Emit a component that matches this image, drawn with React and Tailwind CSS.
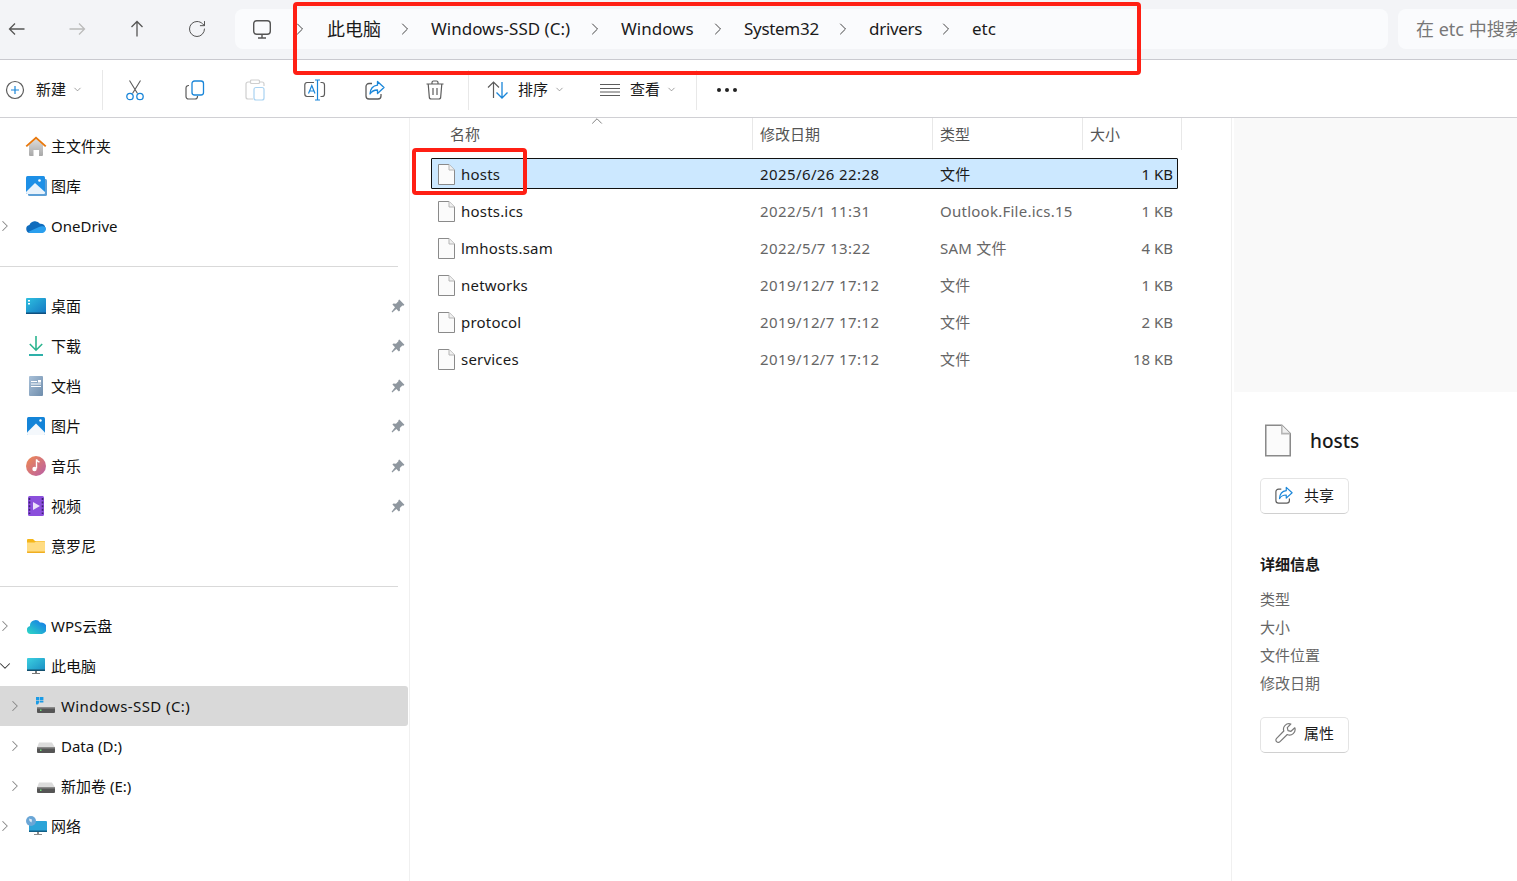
import { RotateCw, ChevronRight, ChevronDown, ChevronUp } from 'lucide-react'

const BLUE = '#1a86d9'
const GRAY = '#5c5c5c'

/* ---------- small drawings ---------- */

const NavArrow = ({ d, color }) => (
  <svg width="20" height="20" viewBox="0 0 20 20" fill="none">
    <path d={d} stroke={color} strokeWidth="1.300" />
  </svg>
)

const MonitorIcon = () => (
  <svg width="18" height="19" viewBox="0 0 18 19" fill="none" className="ml-[18px] shrink-0">
    <rect x=".7" y=".7" width="16.600" height="13.600" rx="3" stroke="#555" strokeWidth="1.400" />
    <path d="M9 14.500v3M5 18h8" stroke="#555" strokeWidth="1.400" />
  </svg>
)

const PlusIcon = () => (
  <svg width="20" height="20" viewBox="0 0 20 20" fill="none">
    <circle cx="10" cy="10" r="8.500" stroke={GRAY} strokeWidth="1.200" />
    <path d="M10 6v8M6 10h8" stroke={BLUE} strokeWidth="1.200" />
  </svg>
)

const CutIcon = () => (
  <svg width="20" height="22" viewBox="0 0 20 22" fill="none">
    <path d="M4.500 1.500 12.500 14.500M15.500 1.500 7.500 14.500" stroke={GRAY} strokeWidth="1.100" />
    <circle cx="5" cy="17.500" r="3.200" stroke={BLUE} strokeWidth="1.300" />
    <circle cx="15" cy="17.500" r="3.200" stroke={BLUE} strokeWidth="1.300" />
  </svg>
)

const CopyIcon = () => (
  <svg width="20" height="20" viewBox="0 0 20 20" fill="none">
    <path d="M4 5.500h-.5A2.500 2.500 0 0 0 1 8v8.500A2.500 2.500 0 0 0 3.500 19H10a2.500 2.500 0 0 0 2.500-2.500V16" stroke={GRAY} strokeWidth="1.200" />
    <rect x="7" y="1" width="11.500" height="14" rx="2.500" stroke={BLUE} strokeWidth="1.300" />
  </svg>
)

const PasteIcon = () => (
  <svg width="20" height="22" viewBox="0 0 20 22" fill="none">
    <path d="M5 3H3a2 2 0 0 0-2 2v13a2 2 0 0 0 2 2h5M15 3h2a2 2 0 0 1 2 2v2" stroke="#cfcfcf" strokeWidth="1.200" />
    <rect x="5.500" y="1" width="9" height="3.500" rx="1" stroke="#cfcfcf" strokeWidth="1.200" />
    <rect x="9" y="8.500" width="10" height="12.500" rx="2" stroke="#a9d3f2" strokeWidth="1.200" />
  </svg>
)

const RenameIcon = () => (
  <svg width="22" height="22" viewBox="0 0 22 22" fill="none">
    <path d="M10 3.500H3A2.500 2.500 0 0 0 .8 6v9A2.500 2.500 0 0 0 3 17.500h7M16.500 3.500H18A2.500 2.500 0 0 1 20.500 6v9a2.500 2.500 0 0 1-2.500 2.500h-1.500" stroke={GRAY} strokeWidth="1.200" />
    <path d="M13.500 1v20M11 1h5M11 21h5" stroke={BLUE} strokeWidth="1.200" />
    <path d="M4.500 14.500 7.800 6.500l3.200 8M5.700 12h4.300" stroke={BLUE} strokeWidth="1.200" />
  </svg>
)

const ShareIcon = ({ size = 20 }) => (
  <svg width={size} height={size} viewBox="0 0 20 20" fill="none">
    <path d="M7 3.500H4A3 3 0 0 0 1 6.500v9.500a3 3 0 0 0 3 3h9a3 3 0 0 0 3-3v-2" stroke={GRAY} strokeWidth="1.300" />
    <path d="M12.500 1.500 19 7.500l-6.500 6V10C9 10 6.800 11 5 14c.3-5 3-8.300 7.500-8.800z" stroke={BLUE} strokeWidth="1.300" strokeLinejoin="round" />
  </svg>
)

const TrashIcon = () => (
  <svg width="18" height="20" viewBox="0 0 18 20" fill="none">
    <path d="M.5 4h17M6 4V2.500A1.500 1.500 0 0 1 7.500 1h3A1.500 1.500 0 0 1 12 2.500V4" stroke={GRAY} strokeWidth="1.200" />
    <path d="M2.200 4 3.300 17a2 2 0 0 0 2 2h7.400a2 2 0 0 0 2-2L15.800 4" stroke={GRAY} strokeWidth="1.200" />
    <path d="M7 8v7M11 8v7" stroke={GRAY} strokeWidth="1.200" />
  </svg>
)

const SortIcon = () => (
  <svg width="22" height="20" viewBox="0 0 22 20" fill="none">
    <path d="M6.500 18V2M1 7.500l5.500-5.500L12 7.500" stroke={GRAY} strokeWidth="1.200" />
    <path d="M15 2v16M9.500 12.500 15 18l5.500-5.500" stroke={BLUE} strokeWidth="1.300" />
  </svg>
)

const ViewIcon = () => (
  <svg width="20" height="14" viewBox="0 0 20 14" fill="none">
    <path d="M0 1.500h20M0 5.500h20M0 9h20M0 12.500h20" stroke={GRAY} strokeWidth="1.100" />
  </svg>
)

const DocIcon = ({ w = 17, h = 21 }) => (
  <svg width={w} height={h} viewBox="0 0 17 21" fill="none">
    <path d="M.5.500h10.500l5.500 5.500v14.500H.5z" fill="#fbfbfb" stroke="#8a8a8a" />
    <path d="M11 .5V6h5.500" fill="#f0f0f0" stroke="#b5b5b5" />
  </svg>
)

const PinIcon = () => (
  <svg width="14" height="14" viewBox="0 0 14 14" fill="#8f979f">
    <path d="M8.300.6 13.400 5.700l-1.100 1-.9-.3-2.600 2.600.2 2.500-1.100 1.100-2.600-2.600L1.300 13.400.6 12.700l3.400-4.500L1.400 5.600l1.100-1.100 2.500.2 2.600-2.600-.3-.9z" />
  </svg>
)

const HomeIcon = () => (
  <svg width="22" height="20" viewBox="0 0 22 20">
    <defs>
      <linearGradient id="homeBody" x1="0" y1="0" x2="0" y2="1">
        <stop offset="0" stopColor="#dcdcdc" />
        <stop offset="1" stopColor="#a8a8a8" />
      </linearGradient>
    </defs>
    <path d="M4 9 11 3l7 6v10a1 1 0 0 1-1 1h-3v-6H8.500v6H5a1 1 0 0 1-1-1z" fill="url(#homeBody)" />
    <path d="M.6 9.800 11 .5l10.400 9.300-1.300 1.200L11 3 1.900 11z" fill="#e8780c" />
  </svg>
)

const GalleryIcon = () => (
  <svg width="21" height="20" viewBox="0 0 21 20">
    <rect x="2" y="3" width="19" height="17" rx="1.500" fill="#5c9fd6" />
    <rect x="0" y="0" width="19" height="18" rx="1.500" fill="#1d8fe6" />
    <path d="M0 16 9 7l10 9v1a1 1 0 0 1-1 1H1.500A1.500 1.500 0 0 1 0 16.500z" fill="#e8f2fb" />
    <circle cx="13.500" cy="4.500" r="1.300" fill="#fff" />
  </svg>
)

const OneDriveIcon = () => (
  <svg width="20" height="13" viewBox="0 0 20 13">
    <path d="M4 13a4 4 0 0 1-.6-7.900A6 6 0 0 1 14 3.800 4.500 4.500 0 0 1 15.500 13z" fill="#0f6cbd" />
    <path d="M4 13h12a4 4 0 0 0 3.500-5.800C18 6 15 6 13 7L3 11.500c0 1 .3 1.500 1 1.500z" fill="#2a9fee" />
  </svg>
)

const DesktopIcon = () => (
  <svg width="20" height="16" viewBox="0 0 20 16">
    <defs>
      <linearGradient id="deskBody" x1="0" y1="0" x2="1" y2="1">
        <stop offset="0" stopColor="#2ec0e0" />
        <stop offset="1" stopColor="#1476c2" />
      </linearGradient>
    </defs>
    <rect width="20" height="16" rx="1" fill="url(#deskBody)" />
    <rect y="14.500" width="20" height="1.500" fill="#10507f" />
    <rect x="2" y="2" width="2" height="1.500" fill="#fff" />
    <rect x="2" y="5" width="2" height="1.500" fill="#fff" />
  </svg>
)

const DownloadIcon = () => (
  <svg width="16" height="20" viewBox="0 0 16 20" fill="none">
    <path d="M8 0v14M1.800 8 8 14.200 14.200 8" stroke="#2cb58f" strokeWidth="1.600" />
    <path d="M1 19h14" stroke="#17a8a0" strokeWidth="1.800" />
  </svg>
)

const DocsIcon = () => (
  <svg width="14" height="20" viewBox="0 0 14 20">
    <defs>
      <linearGradient id="docsBody" x1="0" y1="0" x2="1" y2="1">
        <stop offset="0" stopColor="#a8c0d8" />
        <stop offset="1" stopColor="#6f8dac" />
      </linearGradient>
    </defs>
    <rect width="14" height="20" rx="1" fill="url(#docsBody)" />
    <path d="M2 5.500h6M2 8h10M2 10.500h10" stroke="#fff" strokeWidth="1" />
    <rect x="9" y="4" width="3" height="2.500" fill="#fff" />
  </svg>
)

const PicturesIcon = () => (
  <svg width="18" height="18" viewBox="0 0 18 18">
    <rect width="18" height="18" rx="1.500" fill="#1484d8" />
    <path d="M0 15.500 9 6.500l9 9V17a1 1 0 0 1-1 1H1a1 1 0 0 1-1-1z" fill="#f4f8fc" />
    <circle cx="13.500" cy="3.500" r="1.200" fill="#fff" />
  </svg>
)

const MusicIcon = () => (
  <svg width="20" height="20" viewBox="0 0 20 20">
    <defs>
      <linearGradient id="musicBody" x1="0" y1="0" x2="1" y2="1">
        <stop offset="0" stopColor="#f08a4f" />
        <stop offset="1" stopColor="#b85ea8" />
      </linearGradient>
    </defs>
    <circle cx="10" cy="10" r="10" fill="url(#musicBody)" />
    <path d="M10.500 3.500v9" stroke="#fff" strokeWidth="1.400" />
    <path d="M10.500 3.500c.5 1.800 2.200 2 3 2.800" stroke="#fff" strokeWidth="1.400" fill="none" />
    <circle cx="8.500" cy="13" r="2.200" fill="#fff" />
  </svg>
)

const VideoIcon = () => (
  <svg width="16" height="20" viewBox="0 0 16 20">
    <rect width="16" height="20" rx="1.500" fill="#8b4fdc" />
    <path d="M5 6v8l7-4z" fill="#ebe0fb" />
    <path d="M1.500 2v16" stroke="#3d2270" strokeWidth="1.600" strokeDasharray="2 1.600" />
    <path d="M14.500 2v16" stroke="#3d2270" strokeWidth="1.600" strokeDasharray="2 1.600" />
  </svg>
)

const FolderIcon = () => (
  <svg width="18" height="14" viewBox="0 0 18 14">
    <path d="M0 1a1 1 0 0 1 1-1h5l2 2h9a1 1 0 0 1 1 1v10a1 1 0 0 1-1 1H1a1 1 0 0 1-1-1z" fill="#f5b619" />
    <path d="M0 3.500h7.500L9 2.500h8a1 1 0 0 1 1 1v9a1 1 0 0 1-1 1H1a1 1 0 0 1-1-1z" fill="#ffdc82" />
    <path d="M0 12.500h18V13a1 1 0 0 1-1 1H1a1 1 0 0 1-1-1z" fill="#f0ae20" />
  </svg>
)

const WpsIcon = () => (
  <svg width="19" height="15" viewBox="0 0 19 15">
    <defs>
      <linearGradient id="wpsBody" x1="0" y1="1" x2="1" y2="0">
        <stop offset="0" stopColor="#2ed9c4" />
        <stop offset="1" stopColor="#1272ea" />
      </linearGradient>
    </defs>
    <path d="M4 15a4 4 0 0 1-1-7.900A5.500 5.500 0 0 1 13 3.500 5.500 5.500 0 0 1 15 15z" fill="url(#wpsBody)" />
  </svg>
)

const PcIcon = () => (
  <svg width="18" height="16" viewBox="0 0 18 16">
    <defs>
      <linearGradient id="pcBody" x1="0" y1="0" x2="1" y2="1">
        <stop offset="0" stopColor="#3cd0e0" />
        <stop offset="1" stopColor="#1a8ec4" />
      </linearGradient>
    </defs>
    <rect width="18" height="12.500" rx="1" fill="url(#pcBody)" />
    <rect y="11.500" width="18" height="1.500" fill="#14506f" />
    <path d="M8 13h2v2h3v1H5v-1h3z" fill="#7a7a7a" />
  </svg>
)

const DriveIcon = ({ windows }) => (
  <svg width="20" height="18" viewBox="0 0 20 18">
    {windows && (
      <g fill="#1a9be6">
        <rect x="0" y="0" width="3.400" height="3.400" />
        <rect x="4" y="0" width="3.400" height="3.400" />
        <rect x="0" y="4" width="3.400" height="3.400" />
        <rect x="4" y="4" width="3.400" height="3.400" />
      </g>
    )}
    <path d="M3 5.500h13l3 5H1z" fill="#dcdcdc" />
    <rect x="1" y="10" width="18" height="6" rx="1" fill="#555" />
    <rect x="1" y="10" width="18" height="1.500" fill="#8a8a8a" />
    <rect x="4" y="12.500" width="1.500" height="1.500" fill="#6fe07a" />
  </svg>
)

const NetworkIcon = () => (
  <svg width="21" height="20" viewBox="0 0 21 20">
    <rect x="3" y="5" width="18" height="11" rx="1" fill="#2ca4d8" />
    <rect x="3" y="14.500" width="18" height="1.500" fill="#125f86" />
    <path d="M11 16h2v2h3v1H8v-1h3z" fill="#8a8a8a" />
    <circle cx="5" cy="5" r="5" fill="#6aa6d6" />
    <path d="M3 2.500l3 1-.5 3L3.500 5z" fill="#dfeaf5" />
  </svg>
)

const WrenchIcon = () => (
  <svg width="21" height="21" viewBox="0 0 21 21" fill="none">
    <path d="M19.800 4.800 16 8.300l-3-.7-.7-3 3.500-3.600a5.500 5.500 0 0 0-7 7L1.600 15.300a2.400 2.400 0 0 0 3.400 3.400l7.300-7.200a5.500 5.500 0 0 0 7.500-6.700z" stroke="#7a7a7a" strokeWidth="1.200" strokeLinejoin="round" />
  </svg>
)

/* ---------- data ---------- */

const crumbs = [
  { label: '此电脑', width: 'w-[104px] text-[18px]' },
  { label: 'Windows-SSD (C:)', width: 'w-[190px] text-[17px]' },
  { label: 'Windows', width: 'w-[123px] text-[17px]' },
  { label: 'System32', width: 'w-[125px] text-[17px] tracking-[-0.3px]' },
  { label: 'drivers', width: 'w-[103px] text-[17px] tracking-[-0.3px]' },
  { label: 'etc', width: 'w-[40px] text-[17px]', last: true },
]

const files = [
  { name: 'hosts', date: '2025/6/26 22:28', type: '文件', size: '1 KB', selected: true },
  { name: 'hosts.ics', date: '2022/5/1 11:31', type: 'Outlook.File.ics.15', size: '1 KB' },
  { name: 'lmhosts.sam', date: '2022/5/7 13:22', type: 'SAM 文件', size: '4 KB' },
  { name: 'networks', date: '2019/12/7 17:12', type: '文件', size: '1 KB' },
  { name: 'protocol', date: '2019/12/7 17:12', type: '文件', size: '2 KB' },
  { name: 'services', date: '2019/12/7 17:12', type: '文件', size: '18 KB' },
]

const NavRow = ({ icon, label, arrow, pin, sub, active, labelClass = '' }) => (
  <div className={`relative mr-px flex h-10 items-center text-[15px] text-[#111] ${active ? 'rounded-r-[3px] bg-[#d9d9d9]' : ''}`}>
    {arrow && (
      <span className={`absolute top-1/2 -translate-y-1/2 ${sub ? 'left-[6px]' : 'left-[-4px]'}`}>
        {arrow === 'down' ? (
          <ChevronDown size={18} strokeWidth={1.400} className="text-[#333]" />
        ) : (
          <ChevronRight size={18} strokeWidth={1.400} className="text-[#888]" />
        )}
      </span>
    )}
    <span className={`flex shrink-0 items-center justify-center ${sub ? 'ml-[36px] w-[25px] pr-[5px]' : 'ml-[25px] w-[26px] pr-[4px]'}`}>{icon}</span>
    <span className={labelClass}>{label}</span>
    {pin && (
      <span className="absolute right-[3px] top-1/2 -translate-y-1/2">
        <PinIcon />
      </span>
    )}
  </div>
)

const Divider = () => <div className="mb-[19px] mt-[20px] h-px w-[398px] bg-[#d9d9d9]" />

const SmallChevron = () => <ChevronDown size={11} strokeWidth={1.500} className="text-[#777]" />

const Sep = () => <div className="h-[40px] w-px bg-[#e8e8e8]" />

const PanelButton = ({ icon, label }) => (
  <div className="flex h-[36px] w-[89px] items-center rounded-[5px] border border-[#e4e4e4] border-b-[#d0d0d0] bg-white pb-[2px] pl-[14px] text-[15px] text-[#1a1a1a]">
    <span className="flex w-[29px] items-center">{icon}</span>
    {label}
  </div>
)

export default function App() {
  return (
    <div className="relative flex h-[881px] w-[1517px] flex-col overflow-hidden bg-white font-['Noto_Sans','Noto_Sans_CJK_SC',sans-serif]">
      {/* address bar */}
      <div className="flex h-[60px] shrink-0 items-center border-b border-[#c9c9cf] bg-[#f3f4f7] pb-px">
        <div className="ml-[7px] flex items-center gap-[40px]">
          <NavArrow d="M17.500 10H2.500M8 4.500 2.500 10 8 15.500" color="#555" />
          <NavArrow d="M2.500 10H17.500M12 4.500 17.500 10 12 15.500" color="#bbb" />
          <NavArrow d="M10 17.500V2.500M4.500 8 10 2.500 15.500 8" color="#555" />
          <RotateCw size={20} strokeWidth={1.200} className="text-[#555]" />
        </div>
        <div className="ml-[28px] flex h-[40px] w-[1153px] shrink-0 items-center rounded-lg bg-[#fafbfd] text-[#1a1a1a]">
          <MonitorIcon />
          <ChevronRight size={20} strokeWidth={1.100} className="ml-[19px] mr-[17px] shrink-0 text-[#333]" />
          {crumbs.map((c) => (
            <div key={c.label} className={`flex shrink-0 items-center whitespace-nowrap ${c.width}`}>
              {c.label}
              {!c.last && <ChevronRight size={20} strokeWidth={1.100} className="ml-auto mr-[16px] text-[#333]" />}
            </div>
          ))}
        </div>
        <div className="ml-[10px] flex h-[40px] w-[200px] shrink-0 items-center rounded-lg bg-[#fafbfd] pl-[18px] text-[18px] whitespace-nowrap text-[#777]">
          在 etc 中搜索
        </div>
      </div>

      {/* toolbar */}
      <div className="flex h-[58px] shrink-0 items-center border-b border-[#d0d0d4] pt-[2px] text-[15px] text-[#1a1a1a]">
        <div className="ml-[5px] flex w-[97px] items-center">
          <PlusIcon />
          <span className="ml-[11px]">新建</span>
          <span className="ml-[6px]"><SmallChevron /></span>
        </div>
        <Sep />
        <div className="ml-[2px] flex items-center">
          <span className="flex w-[60px] justify-center"><CutIcon /></span>
          <span className="flex w-[60px] justify-center"><CopyIcon /></span>
          <span className="flex w-[60px] justify-center"><PasteIcon /></span>
          <span className="flex w-[60px] justify-center"><RenameIcon /></span>
          <span className="flex w-[60px] justify-center"><ShareIcon /></span>
          <span className="flex w-[60px] justify-center"><TrashIcon /></span>
        </div>
        <div className="ml-[3px]"><Sep /></div>
        <div className="ml-[18px] flex items-center">
          <SortIcon />
          <span className="ml-[9px]">排序</span>
          <span className="ml-[6px]"><SmallChevron /></span>
        </div>
        <div className="ml-[35px] flex items-center">
          <ViewIcon />
          <span className="ml-[10px]">查看</span>
          <span className="ml-[6px]"><SmallChevron /></span>
        </div>
        <div className="ml-[19px]"><Sep /></div>
        <div className="ml-[20px] flex items-center gap-[4px]">
          <span className="h-[4px] w-[4px] rounded-full bg-[#222]" />
          <span className="h-[4px] w-[4px] rounded-full bg-[#222]" />
          <span className="h-[4px] w-[4px] rounded-full bg-[#222]" />
        </div>
      </div>

      {/* body */}
      <div className="flex min-h-0 flex-1">
        {/* sidebar */}
        <aside className="w-[410px] shrink-0 border-r border-[#f0f0f0] pt-[8px]">
          <NavRow icon={<HomeIcon />} label="主文件夹" />
          <NavRow icon={<GalleryIcon />} label="图库" />
          <NavRow icon={<OneDriveIcon />} label="OneDrive" arrow="right" />
          <Divider />
          <NavRow icon={<DesktopIcon />} label="桌面" pin />
          <NavRow icon={<DownloadIcon />} label="下载" pin />
          <NavRow icon={<DocsIcon />} label="文档" pin />
          <NavRow icon={<PicturesIcon />} label="图片" pin />
          <NavRow icon={<MusicIcon />} label="音乐" pin />
          <NavRow icon={<VideoIcon />} label="视频" pin />
          <NavRow icon={<FolderIcon />} label="意罗尼" />
          <Divider />
          <NavRow icon={<WpsIcon />} label="WPS云盘" arrow="right" />
          <NavRow icon={<PcIcon />} label="此电脑" arrow="down" />
          <NavRow icon={<DriveIcon windows />} label="Windows-SSD (C:)" arrow="right" sub active labelClass="tracking-[0.4px]" />
          <NavRow icon={<DriveIcon />} label="Data (D:)" arrow="right" sub />
          <NavRow icon={<DriveIcon />} label="新加卷 (E:)" arrow="right" sub />
          <NavRow icon={<NetworkIcon />} label="网络" arrow="right" />
        </aside>

        {/* file list */}
        <main className="relative min-w-0 flex-1 border-r border-[#f0f0f0]">
          <ChevronUp size={18} strokeWidth={1.100} className="absolute left-[178px] top-[-6px] text-[#666]" />
          <div className="grid h-[32px] grid-cols-[342px_180px_150px_100px] text-[15px] text-[#555]">
            <div className="pl-[40px] pt-[5px]">名称</div>
            <div className="border-l border-[#e8e8e8] pl-[7px] pt-[5px]">修改日期</div>
            <div className="border-l border-[#e8e8e8] pl-[7px] pt-[5px]">类型</div>
            <div className="border-x border-[#e8e8e8] pl-[7px] pt-[5px]">大小</div>
          </div>
          <div className="ml-[21px] mt-[8px] flex w-[747px] flex-col gap-[6px] text-[15px]">
            {files.map((f) => (
              <div
                key={f.name}
                className={`grid h-[31px] grid-cols-[321px_180px_150px_96px] items-center pt-[2px] ${f.selected ? 'rounded-[1px] bg-[#cce8ff] text-[#1a1a1a] outline -outline-offset-1 outline-[#111]' : 'text-[#666]'}`}
              >
                <div className="flex items-center pl-[7px] text-[#1a1a1a]">
                  <DocIcon />
                  <span className="ml-[6px] tracking-[0.2px]">{f.name}</span>
                </div>
                <div className="pl-[8px] tracking-[0.4px]">{f.date}</div>
                <div className="pl-[8px] whitespace-nowrap tracking-[0.25px]">{f.type}</div>
                <div className="pr-[5px] text-right">{f.size}</div>
              </div>
            ))}
          </div>
        </main>

        {/* details pane */}
        <aside className="w-[285px] shrink-0 pl-[2px]">
          <div className="h-[274px] bg-[#f9f9f9]" />
          <div className="pl-[26px]">
            <div className="mt-[32px] flex items-center pl-[5px]">
              <DocIcon w={26} h={33} />
              <span className="ml-[19px] pt-[2px] text-[19px] font-medium text-[#1a1a1a]">hosts</span>
            </div>
            <div className="mt-[21px]">
              <PanelButton icon={<ShareIcon size={18} />} label="共享" />
            </div>
            <div className="mt-[39px] text-[15px] font-bold text-[#1a1a1a]">详细信息</div>
            <div className="mt-[10px] flex flex-col text-[15px] text-[#666]">
              <div className="flex h-[28px] items-center">类型</div>
              <div className="flex h-[28px] items-center">大小</div>
              <div className="flex h-[28px] items-center">文件位置</div>
              <div className="flex h-[28px] items-center">修改日期</div>
            </div>
            <div className="mt-[19px]">
              <PanelButton icon={<WrenchIcon />} label="属性" />
            </div>
          </div>
        </aside>
      </div>

      {/* red annotation boxes */}
      <div className="absolute left-[293px] top-[2px] h-[73px] w-[848px] rounded-[4px] border-4 border-[#ff1f14]" />
      <div className="absolute left-[412px] top-[148px] h-[47px] w-[115px] rounded-[4px] border-4 border-[#ff1f14]" />
    </div>
  )
}
